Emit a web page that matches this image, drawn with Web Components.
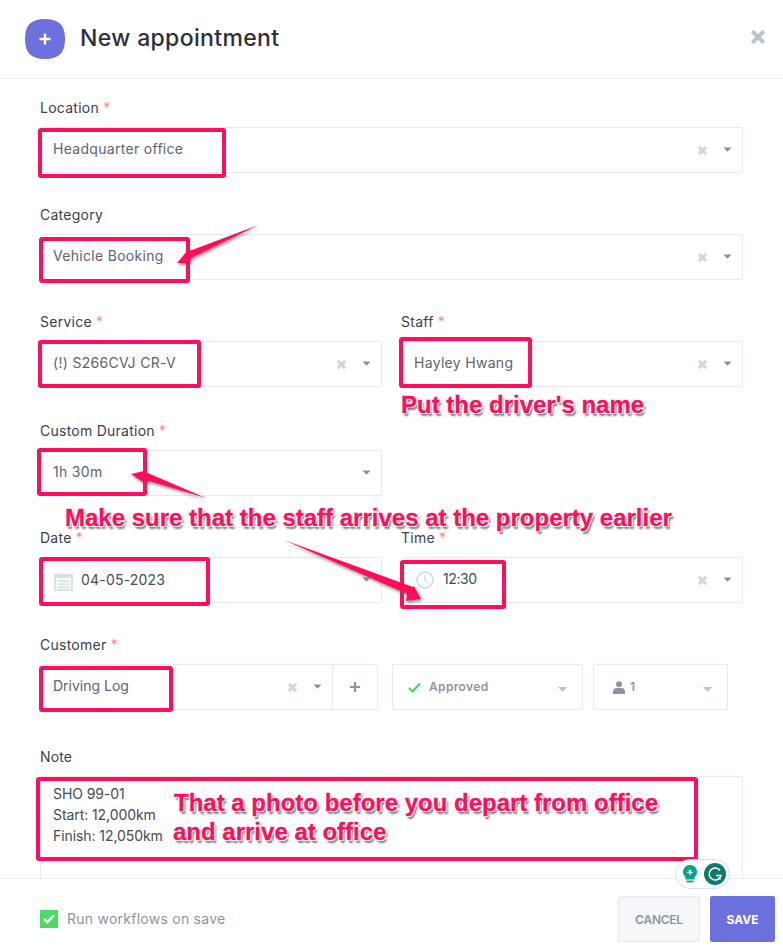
<!DOCTYPE html>
<html lang="en"><head><meta charset="utf-8"><title>New appointment</title>
<style>
html,body{margin:0;padding:0;background:#fff}
body{font-family:Inter,"Noto Sans",sans-serif;font-size:14px;color:#3b4150}
</style></head>
<body>
<x-dialog>
  <x-head slot="head">New appointment</x-head>
  <x-row><x-field label="Location" req><x-select value="Headquarter office" clear></x-select></x-field></x-row>
  <x-row><x-field label="Category"><x-select value="Vehicle Booking" clear></x-select></x-field></x-row>
  <x-row cols="2">
    <x-field label="Service" req><x-select value="(!) S266CVJ CR-V" clear></x-select></x-field>
    <x-field label="Staff" req><x-select value="Hayley Hwang" clear></x-select></x-field>
  </x-row>
  <x-row cols="2" extra><x-field label="Custom Duration" req><x-select value="1h 30m"></x-select></x-field><span></span></x-row>
  <x-row cols="2">
    <x-field label="Date" req><x-select value="04-05-2023" icon="cal" dark></x-select></x-field>
    <x-field label="Time" req><x-select value="12:30" icon="clock" clear dark></x-select></x-field>
  </x-row>
  <x-row>
    <x-customer></x-customer>
  </x-row>
  <x-note></x-note>
  <x-foot slot="foot"></x-foot>
  <x-marks slot="marks"></x-marks>
</x-dialog>
<script>
function def(name, css, html){
  customElements.define(name, class extends HTMLElement{
    constructor(){super();const r=this.attachShadow({mode:'open'});r.innerHTML='<style>'+css+'</style>'+(typeof html==='function'?html(this):html);}
  });
}
const X='<svg width="11" height="11" viewBox="0 0 11 11"><path d="M1.800 1.800l7.400 7.400M9.200 1.800l-7.400 7.400" stroke="#cfd8e0" stroke-width="3.200" fill="none"/></svg>';
const CARET=c=>'<svg width="9" height="5" viewBox="0 0 9 5"><path d="M.5 .5h8L4.500 4.800z" fill="'+c+'"/></svg>';
const ICONS={
 cal:'<svg class="ic" width="19" height="19" viewBox="0 0 19 20" preserveAspectRatio="none" fill="none"><path d="M1 3h17v16H1z" fill="#f6f8f9" stroke="#d6e0e5" stroke-width="1.800"/><path d="M1 3h17v3H1z" fill="#d6e0e5"/><path d="M5 1v3M9.500 1v3M14 1v3" stroke="#d6e0e5" stroke-width="1.400"/><path d="M4 9.500h11M4 12.800h11M4 16h11" stroke="#d6e0e5" stroke-width="1.500"/></svg>',
 clock:'<svg class="ic" width="18" height="18" viewBox="0 0 18 18" fill="none" style="margin:0 0 0 2px"><circle cx="9" cy="9" r="8" stroke="#d4e0e6" stroke-width="1.800"/><path d="M9 4v5.500l3 2.500" stroke="#d4e0e6" stroke-width="1.500"/></svg>'
};
const TXT='Inter,"Noto Sans",sans-serif';

def('x-dialog',`:host{display:flex;flex-direction:column;position:relative;width:783px;height:950px;overflow:hidden;background:#fff}
main{flex:1;min-height:0;overflow:hidden;padding:19px 40px 0;box-sizing:border-box;display:flex;flex-direction:column;gap:32px}`,
`<slot name="head"></slot><main><slot></slot></main><slot name="foot"></slot><slot name="marks"></slot>`);

def('x-head',`:host{display:flex;align-items:center;flex:none;border-bottom:1px solid #e8edf5;padding:0 17px 4px 25px;box-sizing:border-box;height:79px}
.b{width:40px;height:40px;flex:none;margin-right:15px;margin-top:3px}
.t{flex:1;font:500 23px ${TXT};color:#2b303b;letter-spacing:.35px;margin-top:1px}
.c{flex:none}`,
`<svg class="b" viewBox="0 0 40 40"><path d="M20 0C34 0 40 6 40 20S34 40 20 40 0 34 0 20 6 0 20 0z" fill="#6c70dc"/><path d="M20 14.500v11M14.500 20h11" stroke="#fff" stroke-width="2.400"/></svg>
<span class="t"><slot></slot></span>
<svg class="c" width="16" height="16" viewBox="0 0 16 16"><path d="M2.200 2.200l11.600 11.600M13.800 2.200L2.200 13.800" stroke="#b3c7d1" stroke-width="3.800"/></svg>`);

def('x-row',`:host{display:block}
:host([cols="2"]){display:grid;grid-template-columns:342px 342px;column-gap:19px}
:host([extra]){margin-top:2px}`,`<slot></slot>`);

def('x-field',`:host{display:block}
label{display:block;height:29px;font:400 14px/19px ${TXT};color:#3b4150;letter-spacing:.25px}
i{font-style:normal;color:#fb8a78}`,
h=>`<label>${h.getAttribute('label')}${h.hasAttribute('req')?' <i>*</i>':''}</label><slot></slot>`);

def('x-select',`:host{display:flex;align-items:center;height:46px;box-sizing:border-box;border:1px solid #e5e9f3;border-radius:2px;padding:0 10px 0 12px;background:#fff;font:400 14px ${TXT};color:#5d6472;letter-spacing:.3px}
:host([dark]){color:#444b59;letter-spacing:.2px}
:host([icon="cal"]) .v{margin-left:8px;margin-top:-2px}
:host([icon="clock"]) .v{margin-left:9px;letter-spacing:-.4px}
.ic{flex:none;margin:2px 0 0 1px}
.v{flex:1;white-space:nowrap;margin-top:-3px}
.x{flex:none;margin-right:15px;display:flex;margin-top:1px}
.a{flex:none;display:flex;margin-top:-1px}`,
h=>`${ICONS[h.getAttribute('icon')]||''}<span class="v">${h.getAttribute('value')}</span>${h.hasAttribute('clear')?'<span class="x">'+X+'</span>':''}<span class="a">${CARET('#8f8f8f')}</span>`);

def('x-customer',`:host{display:flex;gap:0}
.lab{display:block;font:400 14px/19px ${TXT};color:#3b4150;height:29px;letter-spacing:.25px}
.lab i{font-style:normal;color:#fb8a78}
.w{display:flex;align-items:flex-start}
.g{width:338px;display:flex;flex:none;height:46px;border:1px solid #e5e9f3;box-sizing:border-box;border-radius:2px;align-items:center;padding-left:12px;font-size:14px;color:#5d6472}
.v{flex:1;margin-top:-3px}
.x{display:flex;margin-right:15px;margin-top:1px}
.a{display:flex;margin-top:-1px}
.p{flex:none;width:44px;height:44px;margin-left:10px;border-left:1px solid #e5e9f3;display:flex;align-items:center;justify-content:center}
.s{height:46px;box-sizing:border-box;border:1px solid #e5e9f3;border-radius:2px;display:flex;align-items:center;font:600 12px ${TXT};color:#8d95a5;flex:none;padding-left:15px;padding-right:15px;letter-spacing:.35px}
.s span{flex:1;margin-top:-1px}
.s svg:last-child{margin-top:4px}
.s1{width:191px;margin-left:14px}.s2{width:135px;margin-left:10px;padding-left:19px}`,
`<div><span class="lab">Customer <i>*</i></span>
<div class="w">
<div class="g"><span class="v">Driving Log</span><span class="x">${X}</span><span class="a">${CARET('#8f8f8f')}</span>
<span class="p"><svg width="12" height="12" viewBox="0 0 12 12"><path d="M6 1v10M1 6h10" stroke="#8d95a5" stroke-width="2.200"/></svg></span></div>
<div class="s s1"><svg width="13" height="11" viewBox="0 0 13 11" style="margin-right:8px"><path d="M1 6l3.500 3.500L12 1.500" fill="none" stroke="#4cd964" stroke-width="2.200"/></svg><span>Approved</span><svg width="9" height="5" viewBox="0 0 9 5"><path d="M0 0h9L4.500 5z" fill="#b8c4ce"/></svg></div>
<div class="s s2"><svg width="12" height="13" viewBox="0 0 12 13" style="margin-right:5px"><circle cx="6" cy="3.300" r="3" fill="#8d95a5"/><path d="M0 13v-2.500C0 8 2 7 3.500 7h5C10 7 12 8 12 10.500V13z" fill="#8d95a5"/></svg><span>1</span><svg width="9" height="5" viewBox="0 0 9 5"><path d="M0 0h9L4.500 5z" fill="#b8c4ce"/></svg></div>
</div></div>`);

def('x-note',`:host{display:block;margin-top:5px;flex:none}
label{display:block;font:400 14px/19px ${TXT};color:#3b4150;height:29px;letter-spacing:.15px}
.t{border:1px solid #e5e9f3;border-radius:2px;height:130px;box-sizing:border-box;padding:6px 12px;font:400 14px/21px ${TXT};color:#444b59;letter-spacing:-.08px}`,
`<label>Note</label><div class="t">SHO 99-01<br>Start: 12,000km<br>Finish: 12,050km</div>`);

def('x-foot',`:host{display:flex;align-items:flex-start;flex:none;height:72px;box-sizing:border-box;border-top:1px solid #e8edf5;padding:17px 8px 0 40px;background:#fff;position:relative}
.chk{flex:none;width:18px;height:18px;background:#4cd964;margin:14px 9px 0 0;display:flex;align-items:center;justify-content:center}
.l{flex:1;margin-top:13px;font:400 14px/20px ${TXT};color:#8d95a5;letter-spacing:.25px}
.btn{flex:none;height:46px;box-sizing:border-box;border-radius:2px;display:flex;align-items:center;justify-content:center;font:700 12px ${TXT}}
.c{width:82px;background:#f5f7fb;border:1px solid #e5e9f3;color:#8d95a5;margin-right:10px;letter-spacing:-.25px;font-weight:600}
.s{width:65px;background:#6c70dc;color:#fff}`,
`<span class="chk"><svg width="12" height="10" viewBox="0 0 12 10"><path d="M1.200 5l3.200 3L10.800 1.500" fill="none" stroke="#fff" stroke-width="2.400"/></svg></span>
<span class="l">Run workflows on save</span>
<span class="btn c">CANCEL</span><span class="btn s">SAVE</span>`);

const boxes=[[38,128,226,178],[39,237,190,283],[38,340,201,388],[399,337,532,388],[37,448,147,496],[39,557,210,606],[400,560,506,609],[39,666,173,712],[36,777,698,861]];
def('x-marks',`:host{display:block;position:absolute;inset:0;pointer-events:none}
svg.o{position:absolute;left:0;top:0}
.n{position:absolute;font:700 24px/20px "Liberation Sans",Arial,sans-serif;color:#ff0f5b;white-space:nowrap;-webkit-text-stroke:.3px #ff0f5b;
text-shadow:-1px 0 0 #fff,1px 0 0 #fff,0 -1px 0 #fff,0 1px 0 #fff,-1px -1px 0 #fff,1px -1px 0 #fff,-1px 1px 0 #fff,1px 1px 0 #fff,2px 3px 2px #777}
.g{position:absolute;left:675px;top:859px;width:55px;height:30px;box-sizing:border-box;border:1px solid #d9e0e6;border-radius:15px;background:#fff;display:flex;align-items:center;justify-content:space-between;padding:0 3px 0 6px}`,
`<svg class="o" width="783" height="950" viewBox="0 0 783 950">
<defs><filter id="s" x="-20%" y="-20%" width="150%" height="150%"><feDropShadow dx="1" dy="2" stdDeviation="1.500" flood-color="#555" flood-opacity=".65"/></filter></defs>
${boxes.map(b=>`<rect x="${b[0]+2}" y="${b[1]+2}" width="${b[2]-b[0]-4}" height="${b[3]-b[1]-4}" rx="1" fill="none" stroke="#ff0f5b" stroke-width="4"/>`).join('')}
<g fill="#ff0f5b" filter="url(#s)">
<path d="M258.500 225L192 250 187 251 177 263 190 263 191 258z"/>
<path d="M206 498L150 474 144 471 131 474 146 484 149 481z"/>
<path d="M284 540L407 594 406 601 421 599 414 586 413 587z"/>
</g></svg>
<div class="n" style="left:401px;top:395px">Put the driver's name</div>
<div class="n" style="left:65px;top:508px">Make sure that the staff arrives at the property earlier</div>
<div class="n" style="left:174px;top:793px">That a photo before you depart from office</div>
<div class="n" style="left:173px;top:822px">and arrive at office</div>
<div class="g">
<svg width="16" height="20" viewBox="0 0 16 20"><path d="M8 1a7 7 0 0 1 4.500 12.300V15.500h-9v-2.200A7 7 0 0 1 8 1z" fill="#00a78e"/><path d="M4.500 17.500h7" stroke="#00a78e" stroke-width="1.800"/><path d="M8 4.800l1 2.400 2.400 1-2.400 1-1 2.400-1-2.400-2.400-1 2.400-1z" fill="#fff"/></svg>
<svg width="22" height="22" viewBox="0 0 22 22"><circle cx="11" cy="11" r="11" fill="#0e7a6b"/><path d="M16 7.500A6 6 0 1 0 17 12.500h-5" fill="none" stroke="#fff" stroke-width="1.500"/><path d="M15 15l1.500 1.500" stroke="#fff" stroke-width="1.500"/></svg>
</div>`);
</script>
</body></html>
